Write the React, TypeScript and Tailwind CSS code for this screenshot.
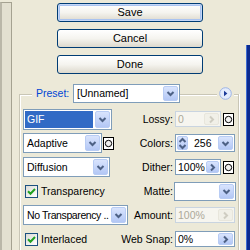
import React from "react";

const Chevron = ({ dir = "down", muted = false }: { dir?: "down" | "right" | "up"; muted?: boolean }) => {
  const d =
    dir === "down" ? "M1.5 3 L4.5 6 L7.5 3" : dir === "up" ? "M1.5 6 L4.5 3 L7.5 6" : "M3 1.5 L6 4.5 L3 7.5";
  return (
    <svg width="9" height="9" viewBox="0 0 9 9">
      <path d={d} fill="none" stroke={muted ? "#CFCDC2" : "#4D6185"} strokeWidth="2" />
    </svg>
  );
};

const ArrowBtn = ({ dir = "down", muted = false }: { dir?: "down" | "right"; muted?: boolean }) => (
  <div
    className={`w-[15px] m-[1px] flex items-center justify-center rounded-[2px] border ${
      muted ? "border-[#E8E6DC] bg-[#F1F0E8]" : "border-[#B8CCF4] bg-gradient-to-b from-[#D9E4FD] to-[#B3C7F5]"
    }`}
  >
    <Chevron dir={dir} muted={muted} />
  </div>
);

const Select = ({
  value,
  w,
  h,
  selected = false,
  tight = false,
}: {
  value: string;
  w: string;
  h: string;
  selected?: boolean;
  tight?: boolean;
}) => (
  <div className={`flex ${w} ${h} border border-[#7F9DB9] bg-white`}>
    <div
      className={`flex-1 flex items-center pl-[2px] m-[1px] whitespace-nowrap overflow-hidden ${
        selected ? "bg-[#316AC5] text-white" : "text-black"
      } ${tight ? "tracking-[-0.4px]" : ""}`}
    >
      {value}
    </div>
    <ArrowBtn />
  </div>
);

const NumField = ({ value, w, disabled = false }: { value: string; w: string; disabled?: boolean }) => (
  <div className={`flex ${w} h-[16px] border ${disabled ? "border-[#C9D4E0] bg-[#F6F5EF]" : "border-[#7F9DB9] bg-white"}`}>
    <div className={`flex-1 flex items-center pl-[2px] ${disabled ? "text-[#ACA899]" : "text-black"}`}>{value}</div>
    <ArrowBtn dir="right" muted={disabled} />
  </div>
);

const MaskIcon = () => (
  <svg width="11" height="13" viewBox="0 0 11 13">
    <rect x="0.5" y="0.5" width="10" height="12" fill="#fff" stroke="#000" />
    <circle cx="5.5" cy="6.5" r="3.2" fill="#F2F2F2" stroke="#000" />
  </svg>
);

const Check = ({ label }: { label: string }) => (
  <div className="flex items-center gap-[3px] pl-[2px]">
    <div className="w-[13px] h-[13px] border border-[#1C5180] bg-gradient-to-br from-[#DCDCD7] to-white flex items-center justify-center">
      <svg width="9" height="9" viewBox="0 0 9 9">
        <path d="M1 4.2 L3.5 6.7 L8 2" fill="none" stroke="#21A121" strokeWidth="2" />
      </svg>
    </div>
    <span>{label}</span>
  </div>
);

const Btn = ({ label, primary = false }: { label: string; primary?: boolean }) => (
  <div
    className={`h-[19px] w-[146px] flex items-center justify-center rounded-[3px] border border-[#003C74] bg-gradient-to-b from-white via-[#F5F4EF] to-[#DDD9CD] text-[11px] ${
      primary ? "shadow-[inset_0_0_0_1px_#C5D7F7,inset_0_0_0_2px_#A9C3F0]" : ""
    }`}
  >
    {label}
  </div>
);

export default function App() {
  return (
    <div className="w-[250px] h-[250px] overflow-hidden flex bg-[#ECE9D8] text-[10.5px] leading-none text-black font-['Liberation_Sans',Arial,sans-serif]">
      {/* left preview frame edge */}
      <div className="mt-[2px] w-[12px] border-l-2 border-l-[#BAB7A8] border-t border-r border-[#A5A291] bg-[#E3E0D0]" />

      <div className="flex-1 flex flex-col">
        <div className="ml-[45px] pt-[3px] flex flex-col gap-[7px]">
          <Btn label="Save" primary />
          <Btn label="Cancel" />
          <Btn label="Done" />
        </div>

        <div className="mt-[20px] ml-[7px] w-[220px] flex-1 border-t border-l border-r border-[#C9C6B6] shadow-[inset_1px_1px_0_#fff,1px_0_0_#fff]">
          <div className="-mt-[11px] h-[19px] flex items-center">
            <div className="w-[53px] flex">
              <span className="ml-[12px] px-[4px] bg-[#ECE9D8] text-[#0046D5]">Preset:</span>
            </div>
            <Select value="[Unnamed]" w="w-[107px]" h="h-[19px]" />
            <div className="flex-1" />
            <div className="mr-[4px] px-[2px] bg-[#ECE9D8] flex">
              <svg width="13" height="13" viewBox="0 0 13 13">
                <circle cx="6.5" cy="6.5" r="5.8" fill="#E4ECFC" stroke="#9DB4E6" />
                <path d="M5 3.8 L8.4 6.5 L5 9.2Z" fill="#1E3C9A" />
              </svg>
            </div>
          </div>

          <div className="mt-[4px] flex flex-col">
            <div className="h-[24px] flex items-center">
              <div className="w-[108px] pl-[3px]">
                <Select value="GIF" w="w-[89px]" h="h-[21px]" selected />
              </div>
              <div className="w-[45px] text-right">Lossy:</div>
              <div className="ml-[2px] flex items-center gap-[2px]">
                <NumField value="0" w="w-[46px]" disabled />
                <MaskIcon />
              </div>
            </div>

            <div className="h-[24px] flex items-center">
              <div className="w-[108px] pl-[3px] flex items-center gap-[1px]">
                <Select value="Adaptive" w="w-[79px]" h="h-[20px]" />
                <MaskIcon />
              </div>
              <div className="w-[45px] text-right">Colors:</div>
              <div className="ml-[2px] flex w-[60px] h-[18px] border border-[#7F9DB9] bg-white">
                <div className="w-[11px] m-[1px] flex items-center justify-center rounded-[2px] border border-[#B8CCF4] bg-gradient-to-b from-[#D9E4FD] to-[#B3C7F5]">
                  <svg width="9" height="13" viewBox="0 0 9 13">
                    <path d="M1.5 5 L4.5 2 L7.5 5" fill="none" stroke="#4D6185" strokeWidth="2" />
                    <path d="M1.5 8 L4.5 11 L7.5 8" fill="none" stroke="#4D6185" strokeWidth="2" />
                  </svg>
                </div>
                <div className="flex-1 flex items-center pl-[5px]">256</div>
                <ArrowBtn />
              </div>
            </div>

            <div className="h-[24px] flex items-center">
              <div className="w-[108px] pl-[3px]">
                <Select value="Diffusion" w="w-[87px]" h="h-[20px]" />
              </div>
              <div className="w-[45px] text-right">Dither:</div>
              <div className="ml-[2px] flex items-center gap-[2px]">
                <NumField value="100%" w="w-[46px]" />
                <MaskIcon />
              </div>
            </div>

            <div className="h-[24px] flex items-center">
              <div className="w-[108px] pl-[3px]">
                <Check label="Transparency" />
              </div>
              <div className="w-[45px] text-right">Matte:</div>
              <div className="ml-[1px] flex w-[62px] h-[19px] border border-[#7F9DB9] bg-white">
                <div className="flex-1" />
                <ArrowBtn />
              </div>
            </div>

            <div className="h-[24px] flex items-center">
              <div className="w-[108px] pl-[3px]">
                <Select value="No Transparency .." w="w-[105px]" h="h-[20px]" tight />
              </div>
              <div className="w-[45px] text-right">Amount:</div>
              <div className="ml-[2px]">
                <NumField value="100%" w="w-[60px]" disabled />
              </div>
            </div>

            <div className="h-[24px] flex items-center">
              <div className="w-[108px] pl-[3px]">
                <Check label="Interlaced" />
              </div>
              <div className="w-[45px] text-right whitespace-nowrap flex justify-end">Web Snap:</div>
              <div className="ml-[2px]">
                <NumField value="0%" w="w-[60px]" />
              </div>
            </div>
          </div>
        </div>
      </div>

      <div className="mt-[45px] w-[4px] border-l border-[#3D6BD1] bg-[#0C2B8F]" />
    </div>
  );
}
